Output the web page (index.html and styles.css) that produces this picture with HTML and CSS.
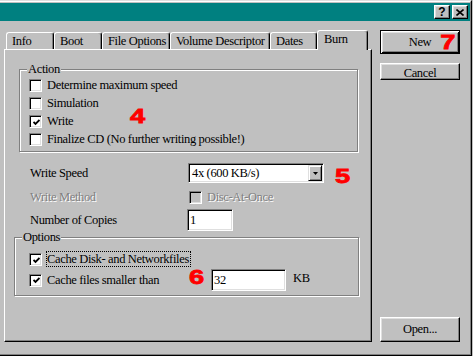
FILE: index.html
```html
<!DOCTYPE html>
<html lang="en">
<head>
    <meta charset="UTF-8">
    <title>Burn Settings</title>
    <link rel="stylesheet" href="styles.css">
</head>
<body>

<div class="window">
<div class="window-inner">

    <!-- Title bar -->
    <div class="title-bar">
        <button class="title-btn help-btn">?</button>
        <button class="title-btn close-btn">
            <svg width="8" height="7" viewBox="0 0 8 7"><path d="M0.5 0.5 L7.5 6.5 M7.5 0.5 L0.5 6.5" stroke="#000" stroke-width="1.6"/></svg>
        </button>
    </div>

    <div class="dialog">

        <!-- Tabs -->
        <div class="tab-area">
            <div class="tab-row">
                <div class="tab tab-info">Info</div>
                <div class="tab tab-boot">Boot</div>
                <div class="tab tab-files">File Options</div>
                <div class="tab tab-volume">Volume Descriptor</div>
                <div class="tab tab-dates">Dates</div>
                <div class="tab tab-burn active">Burn</div>
            </div>

            <div class="tab-panel">

                <!-- Action group -->
                <div class="group group-action">
                    <div class="group-title">Action</div>
                    <div class="check-row">
                        <span class="checkbox"></span>
                        <span class="check-label">Determine maximum speed</span>
                    </div>
                    <div class="check-row">
                        <span class="checkbox"></span>
                        <span class="check-label">Simulation</span>
                    </div>
                    <div class="check-row">
                        <span class="checkbox checked">
                            <svg width="7" height="7" viewBox="0 0 7 7"><path d="M0.5 3 L2.5 5 L6.5 1" stroke="#000" stroke-width="1.8" fill="none"/></svg>
                        </span>
                        <span class="check-label">Write</span>
                    </div>
                    <div class="check-row">
                        <span class="checkbox"></span>
                        <span class="check-label">Finalize CD (No further writing possible!)</span>
                    </div>
                    <span class="marker marker-4">4</span>
                </div>

                <!-- Write settings -->
                <div class="field-row speed-row">
                    <span class="field-label">Write Speed</span>
                    <div class="combo">
                        <span class="combo-text">4x (600 KB/s)</span>
                        <span class="combo-btn">
                            <svg width="5" height="3" viewBox="0 0 5 3"><path d="M0 0 H5 L2.5 3 Z" fill="#000"/></svg>
                        </span>
                    </div>
                    <span class="marker marker-5">5</span>
                </div>
                <div class="field-row method-row">
                    <span class="field-label disabled">Write Method</span>
                    <span class="checkbox disabled-box"></span>
                    <span class="check-label disabled">Disc-At-Once</span>
                </div>
                <div class="field-row copies-row">
                    <span class="field-label">Number of Copies</span>
                    <div class="text-input copies-input">1</div>
                </div>

                <!-- Options group -->
                <div class="group group-options">
                    <div class="group-title">Options</div>
                    <div class="check-row">
                        <span class="checkbox checked">
                            <svg width="7" height="7" viewBox="0 0 7 7"><path d="M0.5 3 L2.5 5 L6.5 1" stroke="#000" stroke-width="1.8" fill="none"/></svg>
                        </span>
                        <span class="check-label focus-label">Cache Disk- and Networkfiles</span>
                    </div>
                    <div class="check-row size-row">
                        <span class="checkbox checked">
                            <svg width="7" height="7" viewBox="0 0 7 7"><path d="M0.5 3 L2.5 5 L6.5 1" stroke="#000" stroke-width="1.8" fill="none"/></svg>
                        </span>
                        <span class="check-label size-label">Cache files smaller than</span>
                        <span class="marker marker-6">6</span>
                        <div class="text-input size-input">32</div>
                        <span class="unit">KB</span>
                    </div>
                </div>

            </div>
        </div>

        <!-- Buttons -->
        <div class="button-column">
            <button class="btn btn-new">New<span class="marker marker-7">7</span></button>
            <button class="btn btn-cancel">Cancel</button>
            <button class="btn btn-open">Open...</button>
        </div>

    </div>
</div>
</div>

</body>
</html>
```

FILE: styles.css
```css
/* General */
body {
    margin: 0;
    background-color: #c0c0c0;
    font-family: 'Liberation Serif', 'Times New Roman', serif;
    font-size: 12.5px;
    letter-spacing: -0.35px;
    color: #000;
    overflow: hidden;
}

/* Window frame */
.window {
    box-sizing: border-box;
    width: 472px;
    height: 356px;
    border-top: 1px solid #dfdfdf;
    border-right: 1px solid #000;
    border-bottom: 1px solid #000;
}

.window-inner {
    box-sizing: border-box;
    height: 100%;
    padding-top: 1px;
    border-top: 1px solid #fff;
    border-right: 1px solid #808080;
    border-bottom: 1px solid #808080;
}

/* Title bar */
.title-bar {
    height: 18px;
    padding-right: 2px;
    background-color: #008080;
    display: flex;
    justify-content: flex-end;
    align-items: center;
    gap: 2px;
}

.title-btn {
    box-sizing: border-box;
    width: 16px;
    height: 14px;
    padding: 0;
    display: flex;
    justify-content: center;
    align-items: center;
    background-color: #c0c0c0;
    border: 1px solid;
    border-color: #fff #000 #000 #fff;
    box-shadow: inset -1px -1px #808080, inset 1px 1px #dfdfdf;
    font-family: 'Liberation Sans', Arial, sans-serif;
    font-weight: bold;
    font-size: 12px;
    line-height: 1;
    color: #000;
}

/* Dialog body */
.dialog {
    display: flex;
    padding: 9px 0 0 4px;
}

.tab-area {
    width: 368px;
}

/* Tabs */
.tab-row {
    display: flex;
    height: 19px;
    padding-left: 2px;
}

.tab {
    box-sizing: border-box;
    height: 17px;
    margin-top: 2px;
    padding-left: 5px;
    line-height: 16px;
    white-space: nowrap;
    border: 1px solid #fff;
    border-right-color: #000;
    border-bottom: none;
    border-radius: 3px 3px 0 0;
    box-shadow: inset -1px 0 #808080;
    background-color: #c0c0c0;
}

.tab.active {
    position: relative;
    z-index: 1;
    height: 20px;
    margin-top: 0;
    padding-left: 6px;
}

.tab-info { width: 48px; }
.tab-boot { width: 48px; }
.tab-files { width: 68px; }
.tab-volume { width: 100px; }
.tab-dates { width: 47px; }
.tab-burn { width: 51px; }

.tab-panel {
    box-sizing: border-box;
    height: 293px;
    border: 1px solid;
    border-color: #fff #000 #000 #fff;
    box-shadow: inset -1px -1px #808080;
}

/* Group boxes */
.group {
    box-sizing: border-box;
    position: relative;
    border: 1px solid #808080;
    box-shadow: inset 1px 1px #fff, 1px 1px #fff;
}

.group-title {
    width: fit-content;
    height: 14px;
    line-height: 14px;
    margin: -8px 0 0 7px;
    padding: 0 1px;
    background-color: #c0c0c0;
}

.group-action {
    width: 339px;
    margin: 19px 0 0 14px;
    padding-bottom: 2px;
}

.group-action .group-title {
    margin-bottom: 1px;
}

.group-action .check-row {
    padding-left: 9px;
}

.group-options {
    width: 345px;
    margin: 6px 0 0 9px;
    padding-bottom: 4px;
}

.group-options .group-title {
    margin-bottom: 7px;
}

.group-options .check-row {
    padding-left: 14px;
}

/* Checkboxes */
.check-row {
    display: flex;
    align-items: flex-start;
    height: 18px;
}

.checkbox {
    box-sizing: border-box;
    flex: none;
    width: 13px;
    height: 13px;
    margin-top: 2px;
    margin-right: 5px;
    display: flex;
    justify-content: center;
    align-items: center;
    background-color: #fff;
    border: 1px solid;
    border-color: #808080 #fff #fff #808080;
    box-shadow: inset 1px 1px #000, inset -1px -1px #dfdfdf;
}

.checkbox svg {
    display: block;
    margin: 1px 0 0 1px;
}

.check-label {
    line-height: 17px;
    white-space: nowrap;
}

.focus-label {
    box-sizing: border-box;
    height: 16px;
    line-height: 14px;
    margin-left: -1px;
    padding-right: 1px;
    border: 1px dotted #000;
}

.disabled {
    color: #808080;
    text-shadow: 1px 1px #fff;
}

.checkbox.disabled-box {
    margin: 0 5px 0 1px;
    background-color: #c0c0c0;
}

/* Field rows */
.field-row {
    display: flex;
    align-items: center;
    margin-left: 25px;
}

.field-label {
    flex: none;
    width: 158px;
    white-space: nowrap;
}

.speed-row {
    height: 20px;
    margin-top: 11px;
}

.method-row {
    height: 18px;
    margin-top: 5px;
}

.copies-row {
    height: 22px;
    margin-top: 3px;
}

/* Combo box */
.combo {
    box-sizing: border-box;
    width: 136px;
    height: 20px;
    padding: 1px;
    display: flex;
    align-items: center;
    background-color: #fff;
    border: 1px solid;
    border-color: #808080 #fff #fff #808080;
    box-shadow: inset 1px 1px #000, inset -1px -1px #dfdfdf;
}

.combo-text {
    flex: 1;
    padding-left: 2px;
    white-space: nowrap;
}

.combo-btn {
    box-sizing: border-box;
    width: 14px;
    height: 16px;
    display: flex;
    justify-content: center;
    align-items: center;
    background-color: #c0c0c0;
    border: 1px solid;
    border-color: #dfdfdf #000 #000 #dfdfdf;
    box-shadow: inset 1px 1px #fff, inset -1px -1px #808080;
}

/* Text inputs */
.text-input {
    box-sizing: border-box;
    height: 22px;
    padding-left: 2px;
    line-height: 20px;
    background-color: #fff;
    border: 1px solid;
    border-color: #808080 #fff #fff #808080;
    box-shadow: inset 1px 1px #000, inset -1px -1px #dfdfdf;
}

.copies-input {
    width: 46px;
    margin-left: -1px;
}

.size-row {
    height: 22px;
    align-items: center;
}

.size-row .checkbox {
    margin-top: 0;
}

.size-label {
    width: 142px;
}

.size-input {
    width: 75px;
    margin-left: 7px;
}

.unit {
    margin-left: 7px;
    margin-bottom: 3px;
}

/* Red annotation numbers */
.marker {
    display: inline-block;
    width: 15px;
    font-family: 'Liberation Sans', Arial, sans-serif;
    font-weight: bold;
    font-size: 21px;
    line-height: 1;
    letter-spacing: 0;
    color: #ff0000;
    -webkit-text-stroke: 0.8px #ff0000;
    transform: scaleX(1.3);
    transform-origin: left center;
}

.marker-4 {
    position: absolute;
    left: 110px;
    top: 35px;
}

.marker-5 {
    align-self: flex-start;
    margin: 2px 0 0 11px;
}

.marker-6 {
    align-self: flex-start;
    margin-top: -3px;
}

.marker-7 {
    position: absolute;
    left: 57px;
    top: 0;
}

/* Buttons */
.button-column {
    display: flex;
    flex-direction: column;
    width: 80px;
    margin-left: 8px;
}

.btn {
    box-sizing: border-box;
    width: 80px;
    padding: 0;
    font: inherit;
    letter-spacing: inherit;
    color: #000;
    background-color: #c0c0c0;
    border: 1px solid;
    border-color: #fff #000 #000 #fff;
    box-shadow: inset -1px -1px #808080, inset 1px 1px #dfdfdf;
}

.btn-new {
    position: relative;
    height: 24px;
    border-color: #000;
    box-shadow: inset 1px 1px #fff, inset -1px -1px #000, inset 2px 2px #dfdfdf, inset -2px -2px #808080;
}

.btn-cancel {
    height: 17px;
    margin-top: 9px;
    padding-top: 2px;
}

.btn-open {
    height: 25px;
    margin-top: auto;
}
```
